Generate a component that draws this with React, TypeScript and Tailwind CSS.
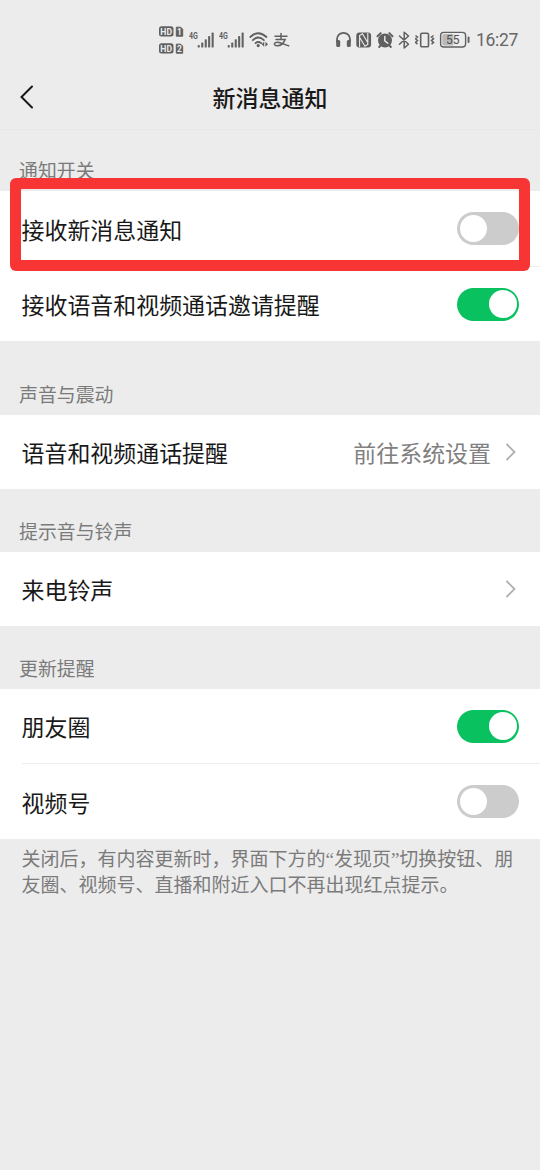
import type { ReactNode } from "react";
import { clsx } from "clsx";

interface RowProps {
  title: string;
  children?: ReactNode;
  divider?: boolean;
  height?: string;
}

const HdBadge = ({ sim }: { sim: string }): JSX.Element => (
  <svg width="25" height="11" viewBox="0 0 25 11">
    <rect x="0" y="0.2" width="14.5" height="10.2" rx="2.5" fill="#606060" />
    <text x="7.2" y="8.5" textAnchor="middle" fontSize="8.6" fontWeight="700" fill="#ececec">
      HD
    </text>
    <path d="M17.3 1.2h4.4l2 2v7h-6.4z" fill="#606060" stroke="#606060" strokeLinejoin="round" />
    <text x="20.5" y="8.8" textAnchor="middle" fontSize="8.4" fontWeight="700" fill="#ececec">
      {sim}
    </text>
  </svg>
);

const Signal = (): JSX.Element => (
  <svg width="26" height="18" viewBox="0 0 26 18">
    <text x="0" y="8" fontSize="9.4" fontWeight="700" textLength="8.8" lengthAdjust="spacingAndGlyphs" fill="#606060">
      4G
    </text>
    <g fill="#636363">
      <rect x="8.7" y="14" width="2.1" height="2.6" rx="0.7" />
      <rect x="12.2" y="11.5" width="2.1" height="5.1" rx="0.7" />
      <rect x="15.7" y="8.3" width="2.1" height="8.3" rx="0.7" />
      <rect x="19.1" y="5" width="2.1" height="11.6" rx="0.7" />
      <rect x="22.6" y="1.6" width="2.1" height="15" rx="0.7" />
    </g>
  </svg>
);

const Wifi = (): JSX.Element => (
  <svg width="20" height="18" viewBox="0 0 20 18" fill="none" stroke="#606060" strokeWidth="1.8" strokeLinecap="round">
    <path d="M1.3 6Q9.3-1.6 17.4 6M3.8 9.2Q9.3 3.9 14.9 9.2M6.5 12.1Q9.3 9.8 12.2 12.1" />
    <circle cx="9.2" cy="14.6" r="1.6" fill="#606060" stroke="none" />
    <path d="M15.2 10.7v5l-2.6-2.5zM16.4 10.7v5l2.6-2.5z" fill="#606060" stroke="none" />
  </svg>
);

// payment app logo
const PayLogo = (): JSX.Element => (
  <svg width="17" height="18" viewBox="272 31 17 18" fill="none" stroke="#606060" strokeWidth="1.5" strokeLinecap="round">
    <path d="M274 36.3h12M280 33.6v5.6M275 39.4h9.2c-1.4 3.4-4.4 6.4-8 6.4-2.3 0-3.2-1.3-2.6-2.4.9-1.7 4.4-1.2 7-.2 2.6 1 4.5 2.1 7 2.6" />
  </svg>
);

const StatusBar = (): JSX.Element => (
  <div className="flex h-[79px] items-center pl-[159px] font-['Roboto',sans-serif]">
    <div className="flex w-[30px] flex-col gap-1.5">
      <HdBadge sim="1" />
      <HdBadge sim="2" />
    </div>
    <div className="flex w-[147px] items-center gap-[4px]">
      <Signal />
      <Signal />
      <Wifi />
      <PayLogo />
    </div>
    {/* headphones */}
    <svg width="16" height="18" viewBox="336 30.5 16 18" className="mr-1 shrink-0">
      <path d="M337 42v-3.2a6.5 6.5 0 0 1 13 0V42" fill="none" stroke="#606060" strokeWidth="1.8" />
      <rect x="336.2" y="39.5" width="4" height="7" rx="1.5" fill="#606060" />
      <rect x="346.8" y="39.5" width="4" height="7" rx="1.5" fill="#606060" />
    </svg>
    {/* nfc */}
    <svg width="16" height="18" viewBox="356 30 16 18" className="mr-1 shrink-0">
      <rect x="356.3" y="31.5" width="14.8" height="15" rx="3" fill="#606060" />
      <path
        d="M359.6 46V34.6l2.8-1.9 5.2 8.6M367.8 32v11.4l-2.8 1.9-5.2-8.6"
        fill="none"
        stroke="#ececec"
        strokeWidth="1.1"
      />
    </svg>
    {/* alarm */}
    <svg width="18" height="18" viewBox="376 30 18 18" className="mr-1 shrink-0">
      <circle cx="385" cy="39.5" r="7" fill="#606060" />
      <path
        d="M377.5 35.3l3.2-3.2M392.5 35.3l-3.2-3.2M380.8 44.2l-1.6 1.8M389.2 44.2l1.6 1.8"
        stroke="#606060"
        strokeWidth="2"
        strokeLinecap="round"
      />
      <path d="M384.8 35.5v4.3l3 2.4" fill="none" stroke="#ececec" strokeWidth="1.4" strokeLinecap="round" />
    </svg>
    {/* bluetooth */}
    <svg width="12" height="18" viewBox="398 30 12 18" className="mr-[5px] shrink-0">
      <path
        d="M399.5 35l9 8.2-4.3 3.8V31.2l4.3 3.8-9 8.2"
        fill="none"
        stroke="#606060"
        strokeWidth="1.5"
        strokeLinejoin="round"
        strokeLinecap="round"
      />
    </svg>
    {/* vibrate */}
    <svg width="20" height="18" viewBox="415 30 20 18" className="mr-1 shrink-0" fill="none" stroke="#606060">
      <rect x="420.7" y="32.2" width="7.8" height="13.6" rx="1.4" strokeWidth="1.6" />
      <path
        d="M415.5 34.5l2 1.5-2 1.8 2 1.8-2 1.8 2 1.7M433.5 34.5l-2 1.5 2 1.8-2 1.8 2 1.8-2 1.7"
        strokeWidth="1.5"
      />
    </svg>
    {/* battery */}
    <svg width="31" height="18" viewBox="439 30.5 31 18" className="mr-[6px] shrink-0">
      <rect x="440.6" y="31.9" width="25" height="14.6" rx="3.2" fill="none" stroke="#606060" strokeWidth="1.4" />
      <path d="M444 33.5h9.3V45H444a1.7 1.7 0 0 1-1.7-1.7v-8.1a1.7 1.7 0 0 1 1.7-1.7z" fill="#b9b9b9" />
      <rect x="467.6" y="36" width="1.9" height="6.5" rx="0.9" fill="#606060" />
      <text x="452.8" y="43.5" textAnchor="middle" fontSize="12" fill="#505050">
        55
      </text>
    </svg>
    <span className="pt-px text-[17.5px] leading-5 tracking-[-0.3px] text-[#666]">16:27</span>
  </div>
);

const Toggle = ({ on }: { on?: boolean }): JSX.Element => (
  <div
    className={clsx(
      "flex h-[33px] w-[62px] items-center rounded-full px-[2.5px]",
      on ? "justify-end bg-[#0ac160]" : "justify-start bg-[#cccccc]"
    )}
  >
    <div className="size-[27.5px] rounded-full bg-white" />
  </div>
);

const Chevron = (): JSX.Element => (
  <svg width="12" height="20" viewBox="0 0 12 20" className="mr-[2px]">
    <path d="M1.5 2l8 8-8 8" fill="none" stroke="#b0b0b0" strokeWidth="1.8" />
  </svg>
);

const Row = ({ title, children, divider, height = "h-[75px]" }: RowProps): JSX.Element => (
  <div className="bg-white pl-[21.5px]">
    <div
      className={clsx("flex items-center justify-between pr-[21px]", height, divider && "border-b border-[#ededed]")}
    >
      <span className="text-[22.95px] leading-8 text-[#191919]">{title}</span>
      {children}
    </div>
  </div>
);

const SectionLabel = ({ children }: { children: string }): JSX.Element => (
  <h2 className="pt-[29px] pb-[8px] pl-[19px] text-[18.9px] leading-[26px] text-[#7b7b7b]">{children}</h2>
);

export default function App(): JSX.Element {
  return (
    <div className="relative h-[1170px] w-[540px] overflow-hidden bg-[#ececec] font-['Noto_Sans_CJK_SC',sans-serif]">
      <StatusBar />
      <header className="grid h-[51px] grid-cols-[60px_1fr_60px] items-start border-b border-[#e8e8e8]">
        <svg width="16" height="26" viewBox="0 0 16 26" className="mt-[5px] ml-[19px]">
          <path d="M13 2.5L2.5 13 13 23.5" fill="none" stroke="#191919" strokeWidth="2" strokeLinecap="round" />
        </svg>
        <h1 className="pt-[2px] text-center text-[23px] leading-8 font-medium text-[#191919]">新消息通知</h1>
      </header>

      <div className="-mt-[2px]">
        <SectionLabel>通知开关</SectionLabel>
      </div>
      <Row title="接收新消息通知" height="h-[76px]" divider>
        <Toggle />
      </Row>
      <Row title="接收语音和视频通话邀请提醒" height="h-[74px]">
        <Toggle on />
      </Row>

      <div className="h-[11px]" />
      <SectionLabel>声音与震动</SectionLabel>
      <Row title="语音和视频通话提醒" height="h-[74px]">
        <div className="flex items-center gap-[14px]">
          <span className="text-[22.95px] leading-8 text-[#808080]">前往系统设置</span>
          <Chevron />
        </div>
      </Row>

      <SectionLabel>提示音与铃声</SectionLabel>
      <Row title="来电铃声" height="h-[74px]">
        <Chevron />
      </Row>

      <SectionLabel>更新提醒</SectionLabel>
      <Row title="朋友圈" divider>
        <Toggle on />
      </Row>
      <Row title="视频号">
        <Toggle />
      </Row>
      <p className="pt-[8px] pl-[21.5px] font-['Liberation_Serif','Noto_Sans_CJK_SC',sans-serif] text-[19px] leading-[25.5px] whitespace-nowrap text-[#7b7b7b]">
        关闭后，有内容更新时，界面下方的“发现页”切换按钮、朋
        <br />
        友圈、视频号、直播和附近入口不再出现红点提示。
      </p>

      {/* highlight frame over the first switch */}
      <div className="absolute top-[178px] left-[10px] h-[93px] w-[520px] rounded-[6px] bg-[#f83535] [clip-path:polygon(evenodd,0_0,100%_0,100%_100%,0_100%,0_0,11px_11px,509px_11px,509px_82px,11px_82px,11px_11px)]" />
    </div>
  );
}
